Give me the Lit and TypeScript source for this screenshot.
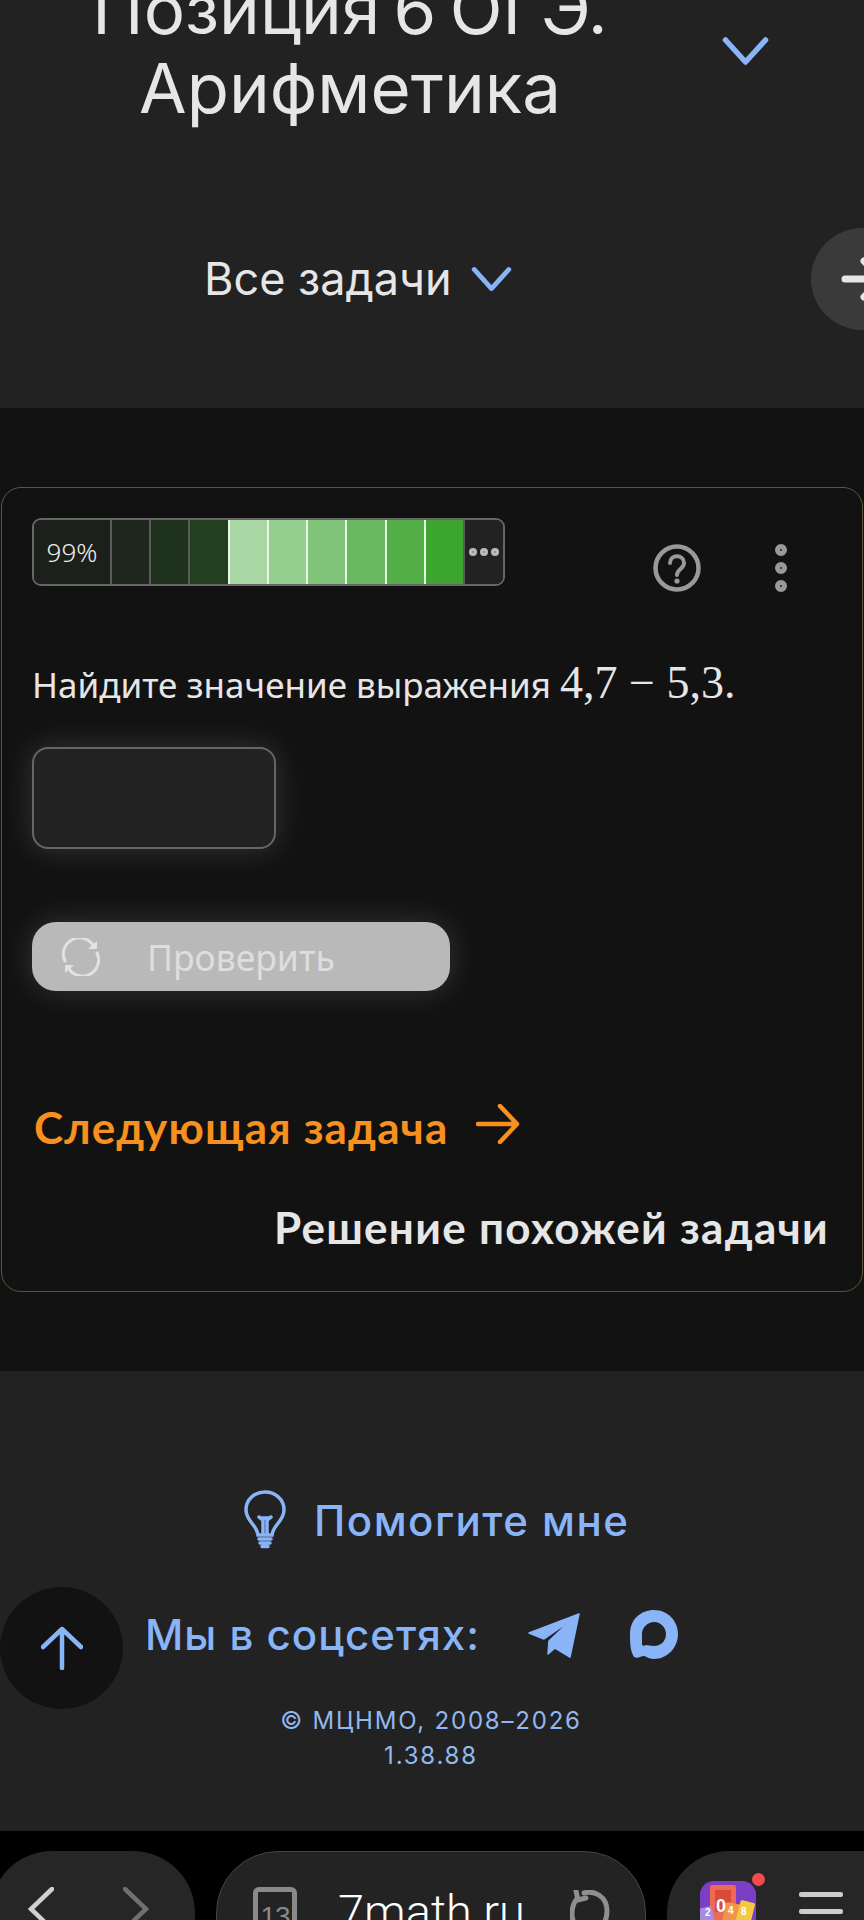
import { LitElement, html, css, svg } from "lit";
import { customElement } from "lit/decorators.js";

const CELLS = [
    { bg: "#20271f", light: false },
    { bg: "#1f321e", light: false },
    { bg: "#223f20", light: false },
    { bg: "#a9d8a5", light: true },
    { bg: "#94cf8f", light: true },
    { bg: "#7fc479", light: true },
    { bg: "#68b95f", light: true },
    { bg: "#53ae48", light: true },
    { bg: "#3ca52e", light: true },
];

const chevron = svg`<path d="M4 4 L24 26 L44 4" fill="none" stroke="currentColor" stroke-width="5.5" stroke-linecap="round" stroke-linejoin="round" />`;

@customElement("app-root")
export class AppRoot extends LitElement {
    static styles = css`
        :host {
            display: block;
            position: relative;
            width: 864px;
            height: 1920px;
            overflow: hidden;
            background: #121212;
            font-family: Inter, "Liberation Sans", sans-serif;
            color: #e6e6e6;
        }

        svg {
            display: block;
            flex: none;
        }

        .head {
            height: 408px;
            background: #222222;
            overflow: hidden;
        }

        .title-row {
            display: flex;
            margin-top: -30px;
            color: #8ab4f8;
        }

        .title {
            width: 700px;
            text-align: center;
            font-size: 69px;
            line-height: 79px;
            word-spacing: -6px;
            color: #e6e6e6;
        }

        .title-chevron {
            margin: 66px 0 0 20px;
        }

        .all-row {
            display: flex;
            align-items: center;
            margin: 121px 0 0 204px;
            font-size: 45px;
            line-height: 60px;
        }

        .all-chevron {
            margin-left: 18px;
            color: #8ab4f8;
        }

        .side-round {
            position: absolute;
            left: 811px;
            top: 228px;
            width: 102px;
            height: 102px;
            border-radius: 50%;
            background: #3a3a3a;
        }

        .side-round svg {
            margin: 23px 0 0 30px;
        }

        .main {
            height: 963px;
            padding: 79px 1px 0;
            box-sizing: border-box;
        }

        .card {
            box-sizing: border-box;
            height: 805px;
            padding: 30px 30px 0;
            border: 1.5px solid #5f5538;
            border-radius: 20px;
            background: #121212;
        }

        .top {
            display: flex;
        }

        .bar {
            display: flex;
            box-sizing: border-box;
            width: 473px;
            height: 68px;
            border: 2px solid #666;
            border-radius: 9px;
            overflow: hidden;
        }

        .pct {
            width: 76px;
            background: #1b201b;
            font-family: "Noto Sans", sans-serif;
            font-size: 26px;
            font-weight: 300;
            line-height: 64px;
            text-align: center;
            color: #eee;
        }

        .cell {
            flex: 1;
            border-left: 2px solid #5c5c5c;
        }

        .cell.light {
            border-left-color: #e9f5e8;
        }

        .more {
            display: flex;
            align-items: center;
            justify-content: center;
            gap: 3px;
            width: 38px;
            border-left: 2px solid #5c5c5c;
            background: #222;
        }

        .more i,
        .dots i {
            display: block;
            box-sizing: border-box;
            border-radius: 50%;
        }

        .more i {
            width: 8px;
            height: 8px;
            border: 3px solid #bbb;
            background: #888;
        }

        .help {
            margin: 26px 0 0 148px;
        }

        .dots {
            display: flex;
            flex-direction: column;
            gap: 6px;
            margin: 26px 0 0 74px;
        }

        .dots i {
            width: 12px;
            height: 12px;
            border: 5px solid #999;
            background: #222;
        }

        .task {
            margin-top: 68px;
            font-family: "Noto Sans", sans-serif;
            font-size: 35px;
            line-height: 50px;
            white-space: nowrap;
        }

        .math {
            font-family: "Liberation Serif", serif;
            font-size: 46px;
            line-height: 40px;
        }

        .answer {
            box-sizing: border-box;
            width: 244px;
            height: 102px;
            margin-top: 37px;
            border: 2px solid #666;
            border-radius: 16px;
            background: #222;
            box-shadow: 0 0 30px rgba(255, 255, 255, 0.15);
        }

        .check {
            display: flex;
            align-items: center;
            box-sizing: border-box;
            width: 418px;
            height: 69px;
            margin-top: 73px;
            padding-left: 30px;
            border-radius: 24px;
            background: #b9b9b9;
            box-shadow: 0 0 30px rgba(255, 255, 255, 0.15);
            font-size: 35.5px;
            color: #dedede;
        }

        .check span {
            margin-left: 47px;
            font-family: "Noto Sans", sans-serif;
        }

        .next {
            display: flex;
            align-items: center;
            margin: 106px 0 0 2px;
            font-family: Lato, sans-serif;
            font-size: 44px;
            font-weight: 700;
            line-height: 60px;
            letter-spacing: 1.15px;
            color: #f7901e;
        }

        .next svg {
            margin: -6px 0 0 28px;
        }

        .similar {
            margin: 40px 3px 0 0;
            font-family: Lato, sans-serif;
            font-size: 44px;
            font-weight: 700;
            line-height: 60px;
            letter-spacing: 1.3px;
            text-align: right;
        }

        .foot {
            height: 460px;
            box-sizing: border-box;
            padding-top: 120px;
            background: #222222;
            color: #8ab4f8;
        }

        .helpme {
            display: flex;
            align-items: center;
            margin-left: 242px;
            font-size: 42px;
            font-weight: 450;
            line-height: 60px;
            letter-spacing: 1.5px;
        }

        .helpme svg {
            margin-top: -4px;
        }

        .helpme span {
            margin-left: 26px;
        }

        .social {
            display: flex;
            align-items: center;
            margin: 54px 0 0 145px;
            font-size: 42px;
            font-weight: 450;
            line-height: 60px;
            letter-spacing: 1px;
        }

        .tg {
            margin-left: 48px;
        }

        .max {
            margin-left: 49px;
        }

        .copy {
            margin-top: 38px;
            padding-right: 2px;
            font-size: 24px;
            line-height: 35px;
            letter-spacing: 1.8px;
            text-align: center;
            color: #92b8ee;
        }

        .up {
            position: absolute;
            left: 0;
            top: 1587px;
            width: 123px;
            height: 122px;
            border-radius: 50%;
            background: #121212;
            color: #8ab4f8;
        }

        .up svg {
            margin: 39px 0 0 41px;
        }

        .browser {
            display: flex;
            gap: 21px;
            height: 89px;
            padding-top: 20px;
            box-sizing: border-box;
            overflow: hidden;
            background: #000;
        }

        .pill {
            display: flex;
            height: 140px;
            box-sizing: border-box;
            border-radius: 62px;
            background: #262626;
        }

        .nav {
            width: 205px;
            margin-left: -10px;
            padding: 36px 0 0 38px;
            gap: 69px;
        }

        .url {
            width: 430px;
            padding: 35px 0 0 36px;
            border: 1.5px solid #444;
            background: #232323;
        }

        .tabs {
            width: 44px;
            height: 60px;
            box-sizing: border-box;
            border: 5px solid #8a8a8a;
            border-radius: 6px;
            font-family: "Liberation Sans", sans-serif;
            font-size: 28px;
            line-height: 50px;
            letter-spacing: -1px;
            text-align: center;
            color: #8a8a8a;
        }

        .host {
            margin: -3px 0 0 41px;
            width: 232px;
            font-family: Roboto, sans-serif;
            font-size: 47px;
            font-weight: 300;
            line-height: 56px;
            color: #fff;
        }

        .reload {
            margin-top: 3px;
        }

        .menu {
            flex: 1;
            padding: 30px 0 0 33px;
            margin-right: -60px;
        }

        .burger {
            margin: 11px 0 0 43px;
        }

        .burger i {
            display: block;
            width: 44px;
            height: 5px;
            margin-bottom: 12px;
            border-radius: 2px;
            background: #ccc;
        }

        .badge {
            position: absolute;
            left: 752px;
            top: 1873px;
            width: 13px;
            height: 13px;
            border-radius: 50%;
            background: #f24b4b;
        }
    `;

    render() {
        return html`
            <header class="head">
                <div class="title-row">
                    <div class="title">Позиция 6 ОГЭ.<br />Арифметика</div>
                    <svg class="title-chevron" width="51" height="30" viewBox="0 0 48 30">${chevron}</svg>
                </div>
                <div class="all-row">
                    Все задачи
                    <svg class="all-chevron" width="43" height="26" viewBox="0 0 48 30">${chevron}</svg>
                </div>
            </header>
            <div class="side-round">
                <svg width="60" height="56" viewBox="0 0 60 56">
                    <path d="M4 28 H60 M23 10 L41 28 L23 46" fill="none" stroke="#e6e6e6" stroke-width="7" stroke-linecap="round" />
                </svg>
            </div>

            <main class="main">
                <section class="card">
                    <div class="top">
                        <div class="bar">
                            <div class="pct">99%</div>
                            ${CELLS.map(
                                (c) => html`<div class="cell ${c.light ? "light" : ""}" style="background:${c.bg}"></div>`
                            )}
                            <div class="more"><i></i><i></i><i></i></div>
                        </div>
                        <svg class="help" width="48" height="48" viewBox="0 0 48 48">
                            <circle cx="24" cy="24" r="21.5" fill="none" stroke="#999" stroke-width="4.5" />
                            <path d="M17 19 C17 10 31 10 31 19 C31 25 24 25 24 31" fill="none" stroke="#999" stroke-width="4" stroke-linecap="round" />
                            <circle cx="24" cy="37" r="2.6" fill="#999" />
                        </svg>
                        <div class="dots"><i></i><i></i><i></i></div>
                    </div>
                    <div class="task">Найдите значение выражения <span class="math">4,7 − 5,3.</span></div>
                    <div class="answer"></div>
                    <div class="check">
                        <svg width="38" height="38" viewBox="0 0 38 38" fill="none" stroke="#e2e2e2" stroke-width="3" stroke-linecap="round">
                            <path d="M3 23 A16 16 0 0 1 32 9" />
                            <path d="M35 15 A16 16 0 0 1 6 29" />
                            <path d="M26 11 L35 11 L35 3 Z" fill="#e2e2e2" stroke="none" />
                            <path d="M12 27 L3 27 L3 35 Z" fill="#e2e2e2" stroke="none" />
                        </svg>
                        <span>Проверить</span>
                    </div>
                    <div class="next">
                        Следующая задача
                        <svg width="44" height="40" viewBox="0 0 44 40">
                            <path d="M2 20 H41 M24 2 L41 20 L24 38" fill="none" stroke="#f7901e" stroke-width="4.5" stroke-linecap="round" stroke-linejoin="round" />
                        </svg>
                    </div>
                    <div class="similar">Решение похожей задачи</div>
                </section>
            </main>

            <footer class="foot">
                <div class="helpme">
                    <svg width="46" height="60" viewBox="12 10 46 60" fill="none" stroke="#8ab4f8" stroke-width="3.5" stroke-linecap="round">
                        <path d="M28 56 C27 46 16 42 16 31 C16 20 25 13 35 13 C45 13 54 20 54 31 C54 42 43 46 42 56 Z" />
                        <path d="M29 38 L33 41 V55 M41 38 L37 41 V55 M30 39 H40" />
                        <path d="M29 60 H41 M30 64 H40 M32 67.5 H38" />
                    </svg>
                    <span>Помогите мне</span>
                </div>
                <div class="social">
                    Мы в соцсетях:
                    <svg class="tg" width="52" height="45" viewBox="26 22 52 45">
                        <path d="M77 23 L27 42 L42 48 L68 30 L47 50 L46 63 L53 57 L68 66 Z" fill="#8ab4f8" stroke="#8ab4f8" stroke-width="1.5" stroke-linejoin="round" />
                    </svg>
                    <svg class="max" width="50" height="50" viewBox="128 19 50 50">
                        <path fill="#8ab4f8" fill-rule="evenodd" d="M133 66 C129 60 129 50 129 43 C129 28 140 19 153 19 C167 19 177 30 177 43 C177 57 166 68 153 68 C147 68 145 65 143 65 C140 65 137 68 133 66 Z M141 54 C141 48 141 46 141 43 C141 36 147 31 153 31 C160 31 165 37 165 43 C165 50 160 55 153 55 C149 55 147 54 145 54 C144 55 142 55 141 54 Z" />
                    </svg>
                </div>
                <div class="copy">© МЦНМО, 2008–2026<br />1.38.88</div>
            </footer>
            <div class="up">
                <svg width="42" height="44" viewBox="0 0 42 44">
                    <path d="M21 42 V3 M2 21 L21 3 L40 21" fill="none" stroke="#8ab4f8" stroke-width="4.5" stroke-linecap="round" stroke-linejoin="round" />
                </svg>
            </div>

            <div class="browser">
                <div class="pill nav">
                    <svg width="26" height="44" viewBox="0 0 26 44"><path d="M24 2 L3 22 L24 42" fill="none" stroke="#d0d0d0" stroke-width="4.5" stroke-linecap="round" /></svg>
                    <svg width="26" height="44" viewBox="0 0 26 44"><path d="M2 2 L23 22 L2 42" fill="none" stroke="#707070" stroke-width="4.5" stroke-linecap="round" /></svg>
                </div>
                <div class="pill url">
                    <div class="tabs">13</div>
                    <div class="host">7math.ru</div>
                    <svg class="reload" width="40" height="60" viewBox="0 0 40 60" fill="none" stroke="#8f8f8f" stroke-width="5" stroke-linecap="round">
                        <path d="M14 3 C24 0 37 6 37 21 C37 30 33 36 28 40" />
                        <path d="M6 10 C3 14 2 18 2 24 C2 30 5 36 10 40" />
                        <path d="M6 1 L8 10 L16 8" />
                    </svg>
                </div>
                <div class="pill menu">
                    <svg width="56" height="70" viewBox="0 0 56 70">
                        <rect width="56" height="70" rx="14" fill="#7a3fc4" />
                        <rect x="10" y="4" width="26" height="44" rx="2" fill="#ee6a55" />
                        <rect x="15" y="9" width="16" height="22" fill="#d94a3a" />
                        <rect x="0" y="26" width="15" height="30" rx="2" fill="#a68be0" transform="rotate(-14 8 41)" />
                        <rect x="23" y="22" width="15" height="30" rx="2" fill="#f0954a" transform="rotate(10 30 37)" />
                        <rect x="37" y="20" width="15" height="30" rx="2" fill="#f3c843" transform="rotate(14 44 35)" />
                        <text x="16" y="31" font-family="Liberation Sans" font-size="18" font-weight="700" fill="#fff">0</text>
                        <text x="5" y="35" font-family="Liberation Sans" font-size="10" font-weight="700" fill="#fff">2</text>
                        <text x="28" y="33" font-family="Liberation Sans" font-size="10" font-weight="700" fill="#fff">4</text>
                        <text x="41" y="34" font-family="Liberation Sans" font-size="10" font-weight="700" fill="#fff">8</text>
                    </svg>
                    <div class="burger"><i></i><i></i></div>
                </div>
            </div>
            <div class="badge"></div>
        `;
    }
}
